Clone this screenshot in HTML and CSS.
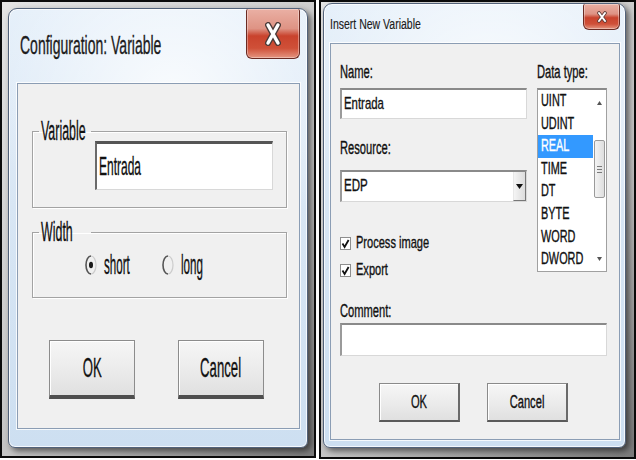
FILE: index.html
```html
<!DOCTYPE html>
<html lang="en">
<head>
    <meta charset="UTF-8">
    <title>Variable dialogs</title>
    <link rel="stylesheet" href="styles.css">
</head>
<body>
    <!-- Configuration: Variable -->
    <div class="shot shot-config">
        <div class="win win-config">
            <div class="titlebar">
                <span class="caption"><span class="sq">Configuration: Variable</span></span>
                <span class="close">
                    <svg width="16" height="24" viewBox="0 0 16 24">
                        <path d="M3 3 L13 21 M13 3 L3 21" stroke="#4a3a38" stroke-width="6" stroke-linecap="round"/>
                        <path d="M3 3 L13 21 M13 3 L3 21" stroke="#fff" stroke-width="3.4" stroke-linecap="round"/>
                    </svg>
                </span>
            </div>
            <div class="client">
                <fieldset class="group group-var">
                    <legend><span class="sq">Variable</span></legend>
                    <div class="edit edit-big"><span class="sq">Entrada</span></div>
                </fieldset>
                <fieldset class="group group-width">
                    <legend><span class="sq">Width</span></legend>
                    <div class="radios">
                        <label class="radio">
                            <svg width="12" height="22" viewBox="0 0 12 22">
                                <path d="M6 2 A5 9 0 0 0 6 20" fill="none" stroke="#555" stroke-width="1.6"/>
                                <path d="M6 2 A5 9 0 0 1 6 20" fill="none" stroke="#ccc" stroke-width="1.2"/>
                                <ellipse cx="6" cy="11" rx="2" ry="3.2" fill="#1a1a1a"/>
                            </svg>
                            <span class="sq">short</span>
                        </label>
                        <label class="radio">
                            <svg width="12" height="22" viewBox="0 0 12 22">
                                <path d="M6 2 A5 9 0 0 0 6 20" fill="none" stroke="#555" stroke-width="1.6"/>
                                <path d="M6 2 A5 9 0 0 1 6 20" fill="none" stroke="#ccc" stroke-width="1.2"/>
                            </svg>
                            <span class="sq">long</span>
                        </label>
                    </div>
                </fieldset>
                <div class="buttons buttons-config">
                    <button class="btn btn-big"><span class="sq">OK</span></button>
                    <button class="btn btn-big"><span class="sq">Cancel</span></button>
                </div>
            </div>
        </div>
    </div>

    <!-- Insert New Variable -->
    <div class="shot shot-insert">
        <div class="win win-insert">
            <div class="titlebar">
                <span class="caption"><span class="sq">Insert New Variable</span></span>
                <span class="close">
                    <svg width="10" height="12" viewBox="0 0 10 12">
                        <path d="M2 2 L8 10 M8 2 L2 10" stroke="#5a3a36" stroke-width="3.6" stroke-linecap="round"/>
                        <path d="M2 2 L8 10 M8 2 L2 10" stroke="#fff" stroke-width="2" stroke-linecap="round"/>
                    </svg>
                </span>
            </div>
            <div class="client">
                <div class="top-row">
                    <div class="col-main">
                        <div class="lbl"><span class="sq">Name:</span></div>
                        <div class="edit edit-name"><span class="sq">Entrada</span></div>
                        <div class="lbl lbl-resource"><span class="sq">Resource:</span></div>
                        <div class="combo">
                            <span class="combo-text"><span class="sq">EDP</span></span>
                            <span class="combo-btn">
                                <svg width="7" height="5" viewBox="0 0 7 5"><path d="M0 0 H7 L3.5 5 Z" fill="#111"/></svg>
                            </span>
                        </div>
                        <label class="check check-first">
                            <svg width="11" height="13" viewBox="0 0 11 13">
                                <rect x="0.5" y="0.5" width="10" height="12" fill="#fff" stroke="#8e8e8e"/>
                                <path d="M2.5 6.5 L4.6 10 L8.6 3" fill="none" stroke="#111" stroke-width="1.8"/>
                            </svg>
                            <span class="sq">Process image</span>
                        </label>
                        <label class="check">
                            <svg width="11" height="13" viewBox="0 0 11 13">
                                <rect x="0.5" y="0.5" width="10" height="12" fill="#fff" stroke="#8e8e8e"/>
                                <path d="M2.5 6.5 L4.6 10 L8.6 3" fill="none" stroke="#111" stroke-width="1.8"/>
                            </svg>
                            <span class="sq">Export</span>
                        </label>
                    </div>
                    <div class="col-type">
                        <div class="lbl"><span class="sq">Data type:</span></div>
                        <div class="listbox">
                            <ul class="items">
                                <li><span class="sq">UINT</span></li>
                                <li><span class="sq">UDINT</span></li>
                                <li class="selected"><span class="sq">REAL</span></li>
                                <li><span class="sq">TIME</span></li>
                                <li><span class="sq">DT</span></li>
                                <li><span class="sq">BYTE</span></li>
                                <li><span class="sq">WORD</span></li>
                                <li><span class="sq">DWORD</span></li>
                            </ul>
                            <div class="vscroll">
                                <span class="arrow">
                                    <svg width="5" height="4" viewBox="0 0 5 4"><path d="M0 4 H5 L2.5 0 Z" fill="#555"/></svg>
                                </span>
                                <span class="thumb"><span class="grip"></span></span>
                                <span class="arrow arrow-down">
                                    <svg width="5" height="4" viewBox="0 0 5 4"><path d="M0 0 H5 L2.5 4 Z" fill="#555"/></svg>
                                </span>
                            </div>
                        </div>
                    </div>
                </div>
                <div class="lbl lbl-comment"><span class="sq">Comment:</span></div>
                <div class="edit edit-comment"></div>
                <div class="buttons buttons-insert">
                    <button class="btn btn-small"><span class="sq">OK</span></button>
                    <button class="btn btn-small"><span class="sq">Cancel</span></button>
                </div>
            </div>
        </div>
    </div>
</body>
</html>
```

FILE: styles.css
```css
* {
    box-sizing: border-box;
}
body {
    margin: 0;
    width: 636px;
    height: 460px;
    display: flex;
    gap: 3px;
    background: #fff;
    font-family: "Liberation Sans", Arial, sans-serif;
    color: #111;
    overflow: hidden;
}

/* squeezed text, the dialogs were captured narrow */
.sq {
    display: inline-block;
    white-space: nowrap;
    transform: scaleX(var(--sx, .65));
    transform-origin: 0 50%;
    -webkit-text-stroke: .35px currentColor;
}

/* screenshot frame */
.shot {
    border: 2px solid #0b0b0b;
    background: linear-gradient(135deg, #e4e4e4 0%, #c4c4c4 60%, #7a7a7a 100%);
}
.shot-config {
    width: 316px;
    height: 458px;
    padding: 6px 0 0 6px;
}
.shot-insert {
    width: 317px;
    height: 459px;
    padding: 1px 0 0 2px;
}

/* window glass */
.win {
    display: flex;
    flex-direction: column;
    border: 1px solid #52627a;
    border-radius: 9px 9px 7px 7px;
    background:
        radial-gradient(ellipse 60% 40% at 55% 20%, rgba(255,255,255,.8), rgba(255,255,255,0)),
        linear-gradient(180deg, #e6f0fa 0%, #d8e6f4 45%, #cddff1 100%);
    box-shadow: inset 0 0 0 1px rgba(255,255,255,.75), 3px 3px 6px rgba(0,0,0,.55);
}
.win-config {
    width: 300px;
    height: 440px;
}
.win-insert {
    width: 303px;
    height: 445px;
}

.titlebar {
    display: flex;
    align-items: flex-start;
    justify-content: space-between;
}
.win-config .titlebar {
    height: 74px;
    padding-left: 11px;
    padding-right: 7px;
}
.win-insert .titlebar {
    height: 39px;
    padding-left: 6px;
    padding-right: 5px;
}
.caption {
    flex: 1;
    min-width: 0;
    color: #1c1c1c;
}
.win-config .caption {
    margin-top: 21px;
    font-size: 25px;
    line-height: 30px;
    --sx: .56;
}
.win-insert .caption {
    margin-top: 11px;
    font-size: 14px;
    line-height: 18px;
    --sx: .75;
}
.win-insert .caption .sq {
    -webkit-text-stroke: .15px currentColor;
}

.close {
    flex-shrink: 0;
    display: flex;
    align-items: center;
    justify-content: center;
    border: 1px solid #6a2a22;
    border-top: none;
    border-radius: 2px 2px 6px 6px;
    background: linear-gradient(180deg, #eab0a4 0%, #de9384 40%, #c9432d 55%, #cf5038 80%, #e49580 100%);
    box-shadow: inset 0 0 0 1px rgba(255,255,255,.35);
}
.win-config .close {
    width: 54px;
    height: 50px;
}
.win-insert .close {
    width: 37px;
    height: 26px;
}

/* client area */
.client {
    background: #f0f0f0;
    border: 1px solid #8b9db4;
    box-shadow: 0 0 0 1px rgba(255,255,255,.8);
}
.win-config .client {
    width: 283px;
    height: 346px;
    margin-left: 8px;
    padding: 36px 0 0 14px;
}
.win-insert .client {
    width: 290px;
    height: 397px;
    margin-left: 6px;
    padding: 16px 0 0 9px;
}

/* group boxes */
.group {
    margin: 0;
    padding: 0;
    width: 255px;
    border: 1px solid #a3a3a3;
    box-shadow: inset 1px 1px #fff, 1px 1px #fff;
    font-size: 27px;
}
.group legend {
    margin-left: 6px;
    padding: 0 2px;
    line-height: 23px;
    height: 23px;
    --sx: .46;
}
.group legend .sq {
    width: 48px;
}
.group-var {
    height: 88px;
}
.group-width {
    height: 77px;
    margin-top: 13px;
}

/* edit boxes */
.edit {
    background: #fff;
    border: 1px solid #d8d8d8;
}
.edit-big {
    width: 178px;
    height: 49px;
    margin: -2px 0 0 62px;
    border-top: 3px solid #555;
    border-left: 2px solid #6a6a6a;
    font-size: 25px;
    line-height: 44px;
    padding-left: 2px;
    --sx: .48;
}

.radios {
    display: flex;
    padding: 0 0 0 52px;
    margin-top: 9px;
}
.radio {
    display: flex;
    align-items: center;
    gap: 7px;
    width: 77px;
    height: 24px;
    --sx: .43;
}
.radio .sq {
    width: 30px;
}

.buttons {
    display: flex;
}
.buttons-config {
    margin-top: 42px;
    margin-left: 17px;
    gap: 43px;
}
.btn {
    font-family: inherit;
    color: #111;
    padding: 0;
    background: linear-gradient(180deg, #f6f6f6 0%, #ececec 50%, #e0e0e0 100%);
    display: flex;
    align-items: center;
    justify-content: center;
}
.btn .sq {
    transform-origin: 50% 50%;
}
.btn-big {
    width: 86px;
    height: 59px;
    font-size: 28px;
    border: 1px solid #8c8c8c;
    border-bottom: 4px solid #4e4e4e;
    box-shadow: inset 1px 1px #fff;
    --sx: .47;
}

/* insert dialog form */
.top-row {
    display: flex;
    gap: 10px;
}
.col-main {
    width: 187px;
}
.col-type {
    width: 70px;
}
.lbl {
    height: 24px;
    line-height: 24px;
    font-size: 18px;
    margin-bottom: 4px;
    --sx: .62;
}
.edit-name {
    height: 31px;
    border-top: 2px solid #8a8a8a;
    border-left: 2px solid #9a9a9a;
    font-size: 17px;
    line-height: 27px;
    padding-left: 2px;
    --sx: .67;
}
.lbl-resource {
    margin-top: 17px;
    margin-bottom: 10px;
}
.combo {
    display: flex;
    height: 32px;
    background: #fff;
    border: 1px solid #d8d8d8;
    border-top: 2px solid #8a8a8a;
    border-left: 2px solid #9a9a9a;
}
.combo-text {
    flex: 1;
    min-width: 0;
    font-size: 17px;
    line-height: 28px;
    padding-left: 2px;
    --sx: .68;
}
.combo-btn {
    flex-shrink: 0;
    width: 13px;
    display: flex;
    align-items: center;
    justify-content: center;
    background: linear-gradient(90deg, #f4f4f4, #dcdcdc);
    border-left: 1px solid #e8e8e8;
    border-right: 1px solid #777;
    border-bottom: 1px solid #777;
}
.check {
    display: flex;
    align-items: center;
    gap: 5px;
    height: 24px;
    margin-top: 3px;
    font-size: 17px;
    --sx: .65;
}
.check-first {
    margin-top: 29px;
}

.listbox {
    display: flex;
    height: 184px;
    background: #fff;
    border: 1px solid #a0a0a0;
    border-top: 2px solid #8a8a8a;
}
.items {
    list-style: none;
    margin: 0;
    padding: 0;
    flex: 1;
    min-width: 0;
    font-size: 16px;
    --sx: .68;
}
.items li {
    height: 22.6px;
    line-height: 22.6px;
    padding-left: 3px;
    overflow: visible;
}
.items li.selected {
    background: #3399ff;
    color: #fff;
}
.vscroll {
    flex-shrink: 0;
    width: 13px;
    display: flex;
    flex-direction: column;
}
.arrow {
    height: 25px;
    display: flex;
    align-items: center;
    justify-content: center;
}
.arrow-down {
    margin-top: auto;
}
.thumb {
    margin-top: 25px;
    margin-left: 1px;
    width: 11px;
    height: 58px;
    border: 1px solid #9a9a9a;
    border-radius: 2px;
    background: linear-gradient(90deg, #f3f3f3, #dedede);
    display: flex;
    align-items: center;
    justify-content: center;
}
.grip {
    width: 5px;
    height: 7px;
    background: repeating-linear-gradient(180deg, #7a7a7a 0 1px, transparent 1px 3px);
}

.lbl-comment {
    margin-top: 17px;
    margin-bottom: 0;
}
.edit-comment {
    width: 267px;
    height: 33px;
    border-top: 2px solid #8a8a8a;
    border-left: 2px solid #9a9a9a;
}
.buttons-insert {
    margin-top: 27px;
    margin-left: 39px;
    gap: 27px;
}
.btn-small {
    width: 81px;
    height: 39px;
    font-size: 18px;
    border: 1px solid #8a8a8a;
    border-bottom: 2px solid #5a5a5a;
    border-right: 2px solid #6a6a6a;
    box-shadow: inset 1px 1px #fff;
    --sx: .62;
}
```
